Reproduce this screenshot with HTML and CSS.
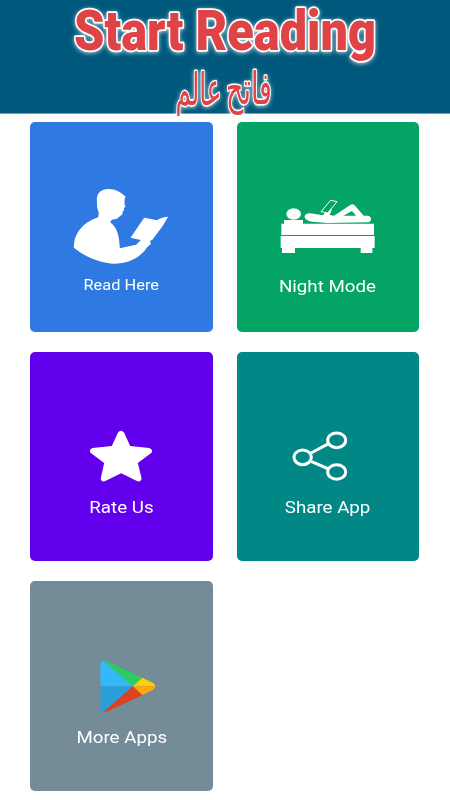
FILE: index.html
```html
<!DOCTYPE html>
<html lang="en">
<head>
  <meta charset="UTF-8">
  <meta name="viewport" content="width=device-width, initial-scale=1.0">
  <title>Start Reading</title>
  <link rel="stylesheet" href="styles.css">
</head>
<body>
  <header>
    <svg class="banner" viewBox="0 0 450 125">
      <text class="title" x="74" y="49.5" textLength="302" lengthAdjust="spacingAndGlyphs">Start Reading</text>
      <g class="urdu" lang="ur">
        <text transform="translate(249 104) scale(.96 1.6)">فاتح</text>
        <text transform="translate(198.5 105) scale(.88 1.62)">عالم</text>
      </g>
    </svg>
  </header>

  <main class="menu">
    <a class="card read">
      <svg class="icon" viewBox="-10.5 0 360 270">
        <path d="M97 57C98 37 112 27 133 27C153 27 170 37 183 50L180 60L180 71L183 80L178 84L179 91L174 95L174 103L168 107L157 116L150 118L142 119L137 127C157 142 164 164 166 205L215 194L229 180L198 173L239 113L278 121Q292 110 311 110L294 139L263 180L257 182L259 192L248 202L239 214C215 239 184 252 145 251C104 248 61 230 28 203C27 164 52 128 101 112L103 99L98 83Z"/>
      </svg>
      <span class="label">Read Here</span>
    </a>

    <a class="card night">
      <svg class="icon" viewBox="9 -30 360 270">
        <ellipse cx="86" cy="72" rx="22" ry="17"/>
        <path d="M57 90H114V101H327V135H49V101H57ZM47 138H329V174H322V189H287V174H90V189H51V174H47Z"/>
        <path d="M119 78C122 69 134 68 147 71L174 76L191 54L201 58L194 75L207 77L257 44Q263 40 269 46L296 77L309 77C321 79 321 96 309 97L187 99L150 96C130 95 117 88 119 78Z"/>
        <path class="cut" d="M235 77L261 63L273 77Z"/>
        <path class="page" d="M168 65L197 31L216 35L188 69Z"/>
      </svg>
      <span class="label">Night Mode</span>
    </a>

    <a class="card rate">
      <svg class="icon" viewBox="-40.5 -30 360 270">
        <path d="M130 38Q139 27 149 38L167 78L224 84Q237 89 231 98L190 129L201 174Q201 186 189 184L140 160L91 184Q78 186 79 174L89 129L48 98Q42 89 54 84L112 78Z"/>
      </svg>
      <span class="label">Rate Us</span>
    </a>

    <a class="card share">
      <svg class="icon outline" viewBox="-6 -30 360 270">
        <path d="M123 99L176 71M123 124L176 147"/>
        <ellipse cx="98" cy="112" rx="26" ry="22"/>
        <ellipse cx="200" cy="61" rx="27" ry="22"/>
        <ellipse cx="200" cy="156" rx="27" ry="22"/>
      </svg>
      <span class="label">Share App</span>
    </a>

    <a class="card more">
      <svg class="icon" viewBox="-10.5 -15 360 270">
        <path fill="#35b8fa" d="M108 124V54Q110 48 116 47L122 48L205 124Z"/>
        <path fill="#2c9fd8" d="M108 124H205L122 201Q109 203 108 195Z"/>
        <path fill="#2ccc60" d="M116 47Q121 46 127 49L234 98L205 124Z"/>
        <path fill="#d94324" d="M116 202Q122 203 127 200L234 150L205 124Z"/>
        <path fill="#ffcf06" d="M205 124L234 98L265 114Q272 118 273 124Z"/>
        <path fill="#ffa80b" d="M205 124L234 150L265 135Q272 131 273 124Z"/>
      </svg>
      <span class="label">More Apps</span>
    </a>
  </main>
</body>
</html>
```

FILE: styles.css
```css
body {
  margin: 0;
  min-height: 100vh;
  background: #fff;
  font-family: Roboto, sans-serif;
}

header {
  height: 113px;
  background: #00597c;
  box-shadow: 0 1px 0 #7f9dab;
}

.banner {
  display: block;
  position: relative;
  z-index: 1;
  width: 450px;
  height: 125px;
  overflow: visible;
  fill: #e04345;
  stroke: #fff;
  stroke-width: 3.5px;
  stroke-linejoin: round;
  paint-order: stroke;
  filter: drop-shadow(0 1px 2px rgba(255, 255, 255, 0.7));
}

.title {
  font-size: 55px;
  font-weight: 900;
}

.urdu {
  font-family: "DejaVu Sans", sans-serif;
  font-size: 28px;
  text-anchor: middle;
  stroke-width: 2.5px;
}

.urdu text {
  vector-effect: non-scaling-stroke;
}

.menu {
  display: grid;
  grid-template-columns: 1fr 1fr;
  grid-auto-rows: 209.5px;
  gap: 20px 24px;
  padding: 9px 31px 9px 30px;
}

.card {
  display: flex;
  flex-direction: column;
  align-items: center;
  box-sizing: border-box;
  padding-top: 58px;
  border-radius: 5px;
  color: #fff;
}

.icon {
  width: 120px;
  height: 90px;
  fill: #fff;
}

.label {
  font-size: 16px;
  line-height: 20px;
  white-space: nowrap;
  transform: scaleX(1.17);
}

.read {
  background: #2f7ae2;
}

.read .label {
  margin-top: 5px;
  font-size: 14px;
}

.night {
  background: #04a564;
}

.night .label {
  margin-top: 6.5px;
}

.night .cut {
  fill: #04a564;
}

.night .page {
  fill: #04a564;
  stroke: #fff;
  stroke-width: 3px;
}

.rate {
  background: #6200ee;
}

.rate .label,
.share .label {
  margin-top: -2px;
}

.share {
  background: #018786;
}

.outline {
  fill: none;
  stroke: #fff;
  stroke-width: 9px;
}

.more {
  background: #748b98;
}

.more .icon {
  margin-top: 1px;
}

.more .label {
  margin-top: -2px;
}
```
